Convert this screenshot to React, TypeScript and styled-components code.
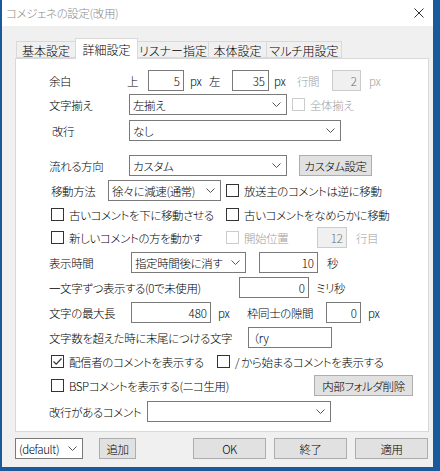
import React from "react";
import styled, { createGlobalStyle } from "styled-components";

const GlobalStyle = createGlobalStyle`
  html, body {
    margin: 0;
    padding: 0;
    background: #1a5a9c;
  }
  * {
    box-sizing: border-box;
  }
`;

const uiFont = `"Noto Sans CJK JP", "Noto Sans", sans-serif`;

const Window = styled.div`
  width: 440px;
  height: 471px;
  display: flex;
  flex-direction: column;
  background: #f0f0f0;
  border-left: 2px solid #1a5a9c;
  border-right: 7px solid #1a5a9c;
  border-bottom: 4px solid #1a5a9c;
  font-family: ${uiFont};
  font-feature-settings: "palt";
  font-size: 11.5px;
  font-weight: 300;
  letter-spacing: -0.4px;
  color: #000;
  overflow: hidden;
`;

const TitleBar = styled.div`
  height: 26px;
  background: #fff;
  display: flex;
  align-items: center;
  justify-content: space-between;
  padding: 0 6px 0 4px;
  color: #8a8a8a;
`;

const CloseIcon = styled.svg`
  width: 10px;
  height: 10px;
  margin-right: 3px;
`;

const Body = styled.div`
  flex: 1;
  display: flex;
  flex-direction: column;
  padding: 12px 4px 0 13px;
`;

const TabStrip = styled.div`
  display: flex;
  align-items: flex-end;
  height: 20px;
  padding-left: 2px;
  position: relative;
  z-index: 1;
`;

const Tab = styled.div<{ $w: number; $active?: boolean }>`
  width: ${(p) => p.$w}px;
  height: ${(p) => (p.$active ? 21 : 17)}px;
  margin-bottom: ${(p) => (p.$active ? -1 : 0)}px;
  display: flex;
  align-items: center;
  justify-content: center;
  background: ${(p) => (p.$active ? "#fff" : "#f0f0f0")};
  border: 1px solid #d9d9d9;
  border-bottom: ${(p) => (p.$active ? "none" : "1px solid #d9d9d9")};
  margin-left: -1px;
  padding-top: ${(p) => (p.$active ? 0 : 1)}px;
  font-size: 12px;
  letter-spacing: 0;
`;

const Panel = styled.div`
  width: 414px;
  height: 374px;
  background: #fff;
  border: 1px solid #d9d9d9;
  display: flex;
  flex-direction: column;
  padding: 11px 0 0 33px;
`;

const Row = styled.div<{ $gap?: number; $indent?: number }>`
  display: flex;
  align-items: center;
  height: 21px;
  margin-top: ${(p) => p.$gap ?? 0}px;
  padding-left: ${(p) => p.$indent ?? 0}px;
  white-space: nowrap;
`;

const Text = styled.span<{ $w?: number; $ml?: number; $disabled?: boolean }>`
  display: inline-block;
  flex: none;
  width: ${(p) => (p.$w ? `${p.$w}px` : "auto")};
  margin-left: ${(p) => p.$ml ?? 0}px;
  color: ${(p) => (p.$disabled ? "#a0a0a0" : "#000")};
`;

const Input = styled.div<{ $w: number; $ml?: number; $left?: boolean; $disabled?: boolean }>`
  flex: none;
  width: ${(p) => p.$w}px;
  height: 21px;
  margin-left: ${(p) => p.$ml ?? 0}px;
  border: 1px solid ${(p) => (p.$disabled ? "#cccccc" : "#7a7a7a")};
  background: ${(p) => (p.$disabled ? "#f0f0f0" : "#fff")};
  color: ${(p) => (p.$disabled ? "#6d6d6d" : "#000")};
  display: flex;
  align-items: center;
  justify-content: ${(p) => (p.$left ? "flex-start" : "flex-end")};
  padding: 0 3px 0 4px;
  letter-spacing: 0;
`;

const SelectBox = styled.div<{ $w: number; $ml?: number }>`
  flex: none;
  width: ${(p) => p.$w}px;
  height: 21px;
  margin-left: ${(p) => p.$ml ?? 0}px;
  border: 1px solid #7a7a7a;
  background: #fff;
  display: flex;
  align-items: center;
  justify-content: space-between;
  padding: 0 5px 0 3px;
`;

const Chevron = styled.svg`
  width: 9px;
  height: 5px;
  flex: none;
`;

const Button = styled.div<{ $w: number; $ml?: number }>`
  flex: none;
  width: ${(p) => p.$w}px;
  height: 21px;
  margin-left: ${(p) => p.$ml ?? 0}px;
  background: #e1e1e1;
  border: 1px solid #adadad;
  display: flex;
  align-items: center;
  justify-content: center;
`;

const CheckItem = styled.label<{ $w?: number; $ml?: number; $disabled?: boolean }>`
  flex: none;
  display: flex;
  align-items: center;
  width: ${(p) => (p.$w ? `${p.$w}px` : "auto")};
  margin-left: ${(p) => p.$ml ?? 0}px;
  color: ${(p) => (p.$disabled ? "#a0a0a0" : "#000")};
`;

const Box = styled.span<{ $disabled?: boolean }>`
  width: 13px;
  height: 13px;
  flex: none;
  border: 1px solid ${(p) => (p.$disabled ? "#cccccc" : "#333333")};
  background: #fff;
  margin-right: 5px;
  display: flex;
  align-items: center;
  justify-content: center;
`;

const Footer = styled.div`
  display: flex;
  align-items: center;
  height: 21px;
  margin-top: 6px;
`;

function Select({ w, ml, value }: { w: number; ml?: number; value: string }) {
  return (
    <SelectBox $w={w} $ml={ml}>
      <span>{value}</span>
      <Chevron viewBox="0 0 9 5">
        <polyline points="0.5,0.5 4.5,4.5 8.5,0.5" fill="none" stroke="#555" strokeWidth="1" />
      </Chevron>
    </SelectBox>
  );
}

function Check({
  label,
  w,
  ml,
  checked,
  disabled,
}: {
  label: string;
  w?: number;
  ml?: number;
  checked?: boolean;
  disabled?: boolean;
}) {
  return (
    <CheckItem $w={w} $ml={ml} $disabled={disabled}>
      <Box $disabled={disabled}>
        {checked && (
          <svg width="11" height="11" viewBox="0 0 11 11">
            <polyline points="1.5,5.5 4.2,8.2 9.5,2.5" fill="none" stroke="#333" strokeWidth="1.2" />
          </svg>
        )}
      </Box>
      {label}
    </CheckItem>
  );
}

export default function App() {
  return (
    <>
      <GlobalStyle />
      <Window>
        <TitleBar>
          <span>コメジェネの設定(改用)</span>
          <CloseIcon viewBox="0 0 10 10">
            <path d="M0.5 0.5 L9.5 9.5 M9.5 0.5 L0.5 9.5" stroke="#333" strokeWidth="1" />
          </CloseIcon>
        </TitleBar>
        <Body>
          <TabStrip>
            <Tab $w={60}>基本設定</Tab>
            <Tab $w={63} $active>
              詳細設定
            </Tab>
            <Tab $w={72}>リスナー指定</Tab>
            <Tab $w={59}>本体設定</Tab>
            <Tab $w={76}>マルチ用設定</Tab>
          </TabStrip>
          <Panel>
            <Row>
              <Text $w={78}>余白</Text>
              <Text $w={21}>上</Text>
              <Input $w={36}>5</Input>
              <Text $w={19} $ml={6}>px</Text>
              <Text $w={23}>左</Text>
              <Input $w={37}>35</Input>
              <Text $w={23} $ml={5}>px</Text>
              <Text $w={35} $disabled>行間</Text>
              <Input $w={29} $disabled>2</Input>
              <Text $ml={8} $disabled>px</Text>
            </Row>
            <Row $gap={3}>
              <Text $w={80}>文字揃え</Text>
              <Select w={158} value="左揃え" />
              <Check ml={5} label="全体揃え" disabled />
            </Row>
            <Row $gap={5} $indent={3}>
              <Text $w={77}>改行</Text>
              <Select w={212} value="なし" />
            </Row>
            <Row $gap={14}>
              <Text $w={80}>流れる方向</Text>
              <Select w={158} value="カスタム" />
              <Button $w={73} $ml={12}>カスタム設定</Button>
            </Row>
            <Row $gap={4} $indent={2}>
              <Text $w={57}>移動方法</Text>
              <Select w={113} value="徐々に減速(通常)" />
              <Check ml={5} label="放送主のコメントは逆に移動" />
            </Row>
            <Row $gap={3} $indent={2}>
              <Check w={175} label="古いコメントを下に移動させる" />
              <Check label="古いコメントをなめらかに移動" />
            </Row>
            <Row $gap={2} $indent={2}>
              <Check w={175} label="新しいコメントの方を動かす" />
              <Check w={91} label="開始位置" disabled />
              <Input $w={30} $disabled>12</Input>
              <Text $ml={9} $disabled>行目</Text>
            </Row>
            <Row $gap={4}>
              <Text $w={82}>表示時間</Text>
              <Select w={115} value="指定時間後に消す" />
              <Input $w={59} $ml={13}>10</Input>
              <Text $ml={9}>秒</Text>
            </Row>
            <Row $gap={4}>
              <Text $w={190}>一文字ずつ表示する(0で未使用)</Text>
              <Input $w={70}>0</Input>
              <Text $ml={7}>ミリ秒</Text>
            </Row>
            <Row $gap={4}>
              <Text $w={82}>文字の最大長</Text>
              <Input $w={80}>480</Input>
              <Text $w={29} $ml={7}>px</Text>
              <Text $w={79}>枠同士の隙間</Text>
              <Input $w={35}>0</Input>
              <Text $ml={7}>px</Text>
            </Row>
            <Row $gap={4}>
              <Text $w={199}>文字数を超えた時に末尾につける文字</Text>
              <Input $w={84} $left>
                （ry
              </Input>
            </Row>
            <Row $gap={3} $indent={2}>
              <Check w={166} label="配信者のコメントを表示する" checked />
              <Check label="/ から始まるコメントを表示する" />
            </Row>
            <Row $gap={3} $indent={2}>
              <Check w={263} label="BSPコメントを表示する(ニコ生用)" />
              <Button $w={99}>内部フォルダ削除</Button>
            </Row>
            <Row $gap={5}>
              <Text $w={98}>改行があるコメント</Text>
              <Select w={184} value="" />
            </Row>
          </Panel>
          <Footer>
            <Select w={68} value="(default)" />
            <Button $w={37} $ml={16}>追加</Button>
            <Button $w={73} $ml={57}>OK</Button>
            <Button $w={73} $ml={8}>終了</Button>
            <Button $w={73} $ml={8}>適用</Button>
          </Footer>
        </Body>
      </Window>
    </>
  );
}
